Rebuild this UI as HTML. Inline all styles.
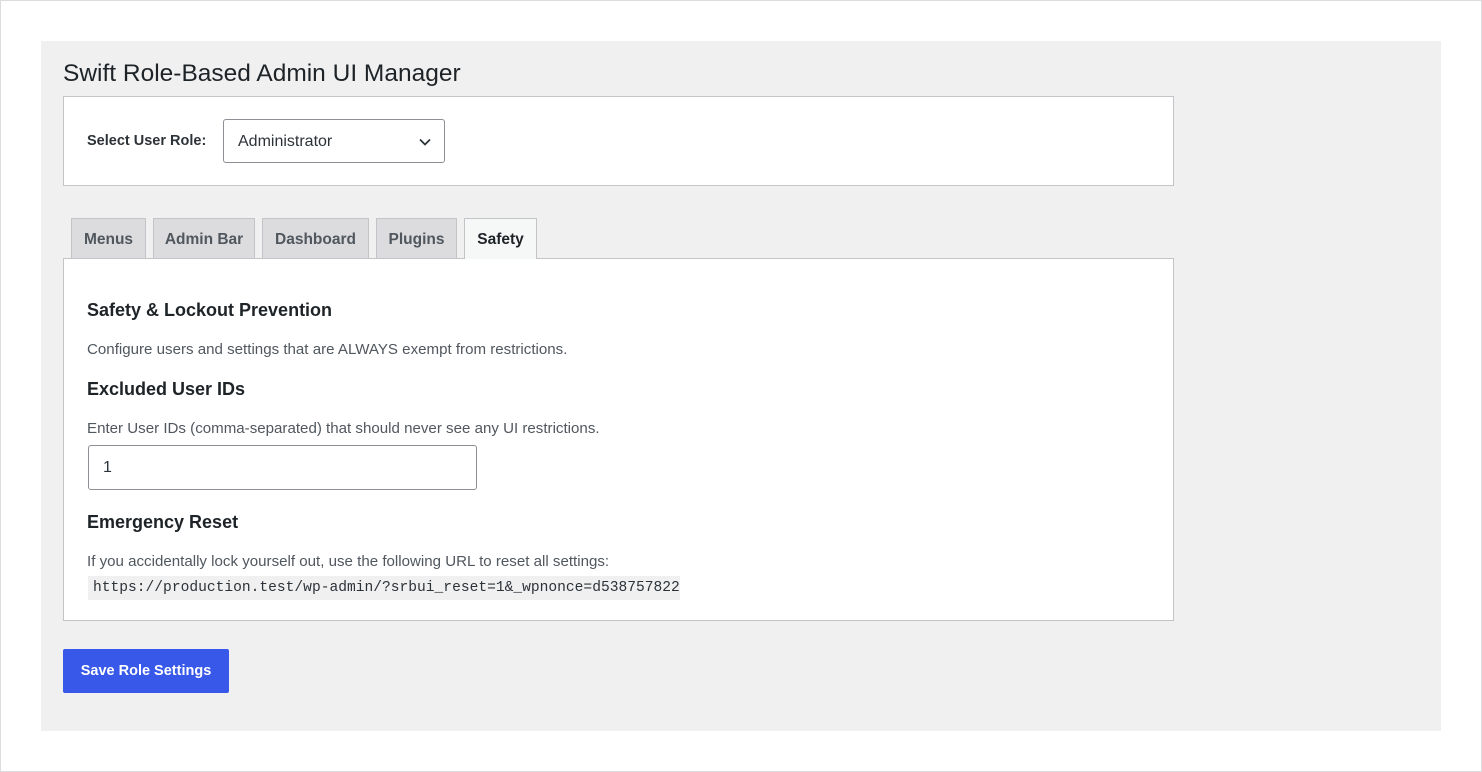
<!DOCTYPE html>
<html><head><style>
*{box-sizing:border-box;margin:0;padding:0}
body{width:1482px;height:772px;background:#fff;font-family:"Liberation Sans",sans-serif;position:relative;overflow:hidden;color:#1d2327}
.frame{position:absolute;left:0;top:0;width:1482px;height:772px;border:1px solid #dcdcde}
.wrap{position:absolute;left:41px;top:41px;width:1400px;height:690px;background:#f0f0f1}
.a{position:absolute}
h1{position:absolute;left:63px;top:60px;font-size:24.5px;font-weight:400;color:#1d2327}
.panel{position:absolute;background:#fff;border:1px solid #c3c4c7}
.tab{position:absolute;top:218px;height:40px;background:#dcdcde;border:1px solid #c3c4c7;border-bottom:none;font-size:15.5px;font-weight:700;color:#50575e;text-align:center;line-height:41px}
.h{position:absolute;left:87px;font-size:18px;font-weight:700;color:#1d2327}
.p{position:absolute;left:87px;font-size:15.1px;color:#50575e}
</style></head><body>
<div class="frame"></div>
<div class="wrap"></div>
<h1>Swift Role-Based Admin UI Manager</h1>
<div class="panel" style="left:63px;top:96px;width:1111px;height:90px"></div>
<div class="a" style="left:87px;top:133px;font-size:14.5px;font-weight:700;color:#2c3338">Select User Role:</div>
<div class="a" style="left:223px;top:119px;width:222px;height:44px;border:1px solid #8c8f94;border-radius:3px;background:#fff;font-size:16px;line-height:43px;padding-left:14px;color:#2c3338">Administrator
<svg class="a" style="right:12px;top:17px" width="14" height="10" viewBox="0 0 14 10"><path d="M2 2.5l5 5 5-5" fill="none" stroke="#2c3338" stroke-width="1.7"/></svg></div>
<div class="tab" style="left:71px;width:75px">Menus</div>
<div class="tab" style="left:153px;width:102px">Admin Bar</div>
<div class="tab" style="left:262px;width:107px">Dashboard</div>
<div class="tab" style="left:376px;width:81px">Plugins</div>
<div class="panel" style="left:63px;top:258px;width:1111px;height:363px"></div>
<div class="tab" style="left:464px;width:73px;height:41px;background:#f6f7f7;color:#1d2327;z-index:2">Safety</div>
<div class="h" style="top:300px">Safety &amp; Lockout Prevention</div>
<div class="p" style="top:341px">Configure users and settings that are ALWAYS exempt from restrictions.</div>
<div class="h" style="top:379px">Excluded User IDs</div>
<div class="p" style="top:420px">Enter User IDs (comma-separated) that should never see any UI restrictions.</div>
<div class="a" style="left:88px;top:445px;width:389px;height:45px;border:1px solid #8c8f94;border-radius:3px;background:#fff;font-size:16px;line-height:44px;padding-left:14px;color:#2c3338">1</div>
<div class="h" style="top:512px">Emergency Reset</div>
<div class="p" style="top:553px">If you accidentally lock yourself out, use the following URL to reset all settings:</div>
<div class="a" style="left:88px;top:576px;width:592px;height:24px;background:#f0f0f1;font-family:'Liberation Mono',monospace;font-size:14.6px;line-height:24px;padding-left:5px;color:#2c3338;white-space:nowrap">https://production.test/wp-admin/?srbui_reset=1&amp;_wpnonce=d538757822</div>
<div class="a" style="left:63px;top:649px;width:166px;height:44px;background:#3858e9;border-radius:2px;color:#fff;font-size:14.5px;font-weight:700;text-align:center;line-height:44px">Save Role Settings</div>
</body></html>
